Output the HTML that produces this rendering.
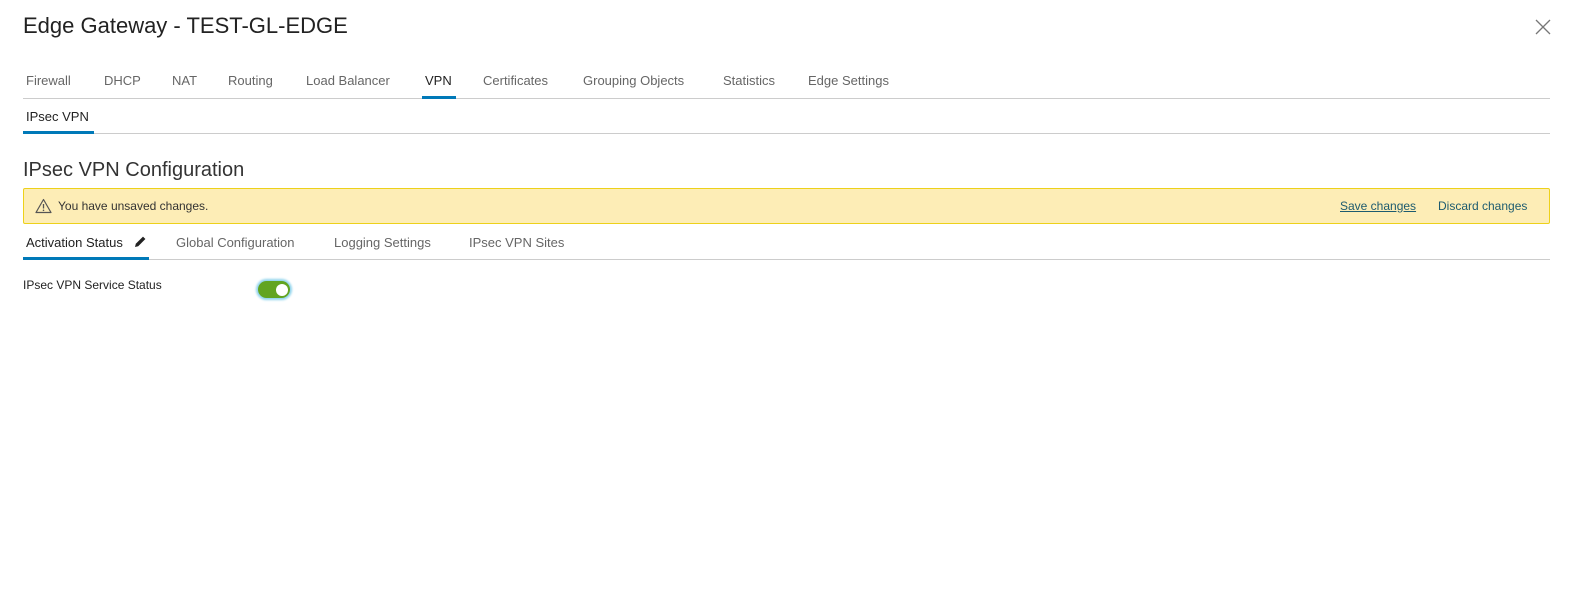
<!DOCTYPE html>
<html><head><meta charset="utf-8"><style>
body{margin:0;width:1573px;height:590px;background:#fff;font-family:"Liberation Sans",sans-serif;position:relative;overflow:hidden;color:#333}
.a{position:absolute;white-space:nowrap}
.t{font-size:13px;color:#666;top:73px}
.s{font-size:13px;color:#666;top:235px}
.line{position:absolute;height:1px;background:#ccc}
.ul{position:absolute;height:3px;background:#0079b8}
</style></head><body>
<div class="a" style="left:23px;top:13px;font-size:22px;color:#222">Edge Gateway - TEST-GL-EDGE</div>
<svg class="a" style="left:1535px;top:19px" width="16" height="16" viewBox="0 0 16 16"><path d="M1 1L15 15M15 1L1 15" stroke="#777" stroke-width="1.3"/></svg>
<span class="a t" style="left:26px">Firewall</span>
<span class="a t" style="left:104px">DHCP</span>
<span class="a t" style="left:172px">NAT</span>
<span class="a t" style="left:228px">Routing</span>
<span class="a t" style="left:306px">Load Balancer</span>
<span class="a t" style="left:425px;color:#222">VPN</span>
<span class="a t" style="left:483px">Certificates</span>
<span class="a t" style="left:583px">Grouping Objects</span>
<span class="a t" style="left:723px">Statistics</span>
<span class="a t" style="left:808px">Edge Settings</span>
<div class="line" style="left:23px;width:1527px;top:98px"></div>
<div class="ul" style="left:422px;width:34px;top:96px"></div>
<span class="a" style="left:26px;top:109px;font-size:13px;color:#222">IPsec VPN</span>
<div class="line" style="left:23px;width:1527px;top:133px"></div>
<div class="ul" style="left:23px;width:71px;top:131px"></div>
<div class="a" style="left:23px;top:159px;font-size:20px;color:#333">IPsec VPN Configuration</div>
<div class="a" style="left:23px;top:188px;width:1525px;height:34px;background:#fdedb6;border:1px solid #edd11a;border-radius:2px"></div>
<svg class="a" style="left:35px;top:198px" width="17" height="16" viewBox="0 0 17 16"><path d="M8.5 1.5L16 14.5H1Z" fill="none" stroke="#555" stroke-width="1.2" stroke-linejoin="round"/><path d="M8.5 6v4.5" stroke="#555" stroke-width="1.3"/><circle cx="8.5" cy="12.3" r=".8" fill="#555"/></svg>
<span class="a" style="left:58px;top:199px;font-size:12px;color:#333">You have unsaved changes.</span>
<span class="a" style="left:1340px;top:199px;font-size:12px;color:#1d5b6f;text-decoration:underline">Save changes</span>
<span class="a" style="left:1438px;top:199px;font-size:12px;color:#1d5b6f">Discard changes</span>
<span class="a s" style="left:26px;color:#222">Activation Status</span>
<svg class="a" style="left:134px;top:235px" width="13" height="13" viewBox="0 0 13 13"><path d="M1 12l.8-3.2L9 1.6l2.4 2.4-7.2 7.2z" fill="#222"/></svg>
<span class="a s" style="left:176px">Global Configuration</span>
<span class="a s" style="left:334px">Logging Settings</span>
<span class="a s" style="left:469px">IPsec VPN Sites</span>
<div class="line" style="left:23px;width:1527px;top:259px"></div>
<div class="ul" style="left:23px;width:126px;top:257px"></div>
<span class="a" style="left:23px;top:278px;font-size:12px;color:#222">IPsec VPN Service Status</span>
<div class="a" style="left:258px;top:281px;width:32px;height:17px;border-radius:10px;background:#62a420;box-shadow:0 0 2px 2px #8fd3ec"></div>
<div class="a" style="left:276px;top:284px;width:12px;height:12px;border-radius:50%;background:#fff"></div>
</body></html>
